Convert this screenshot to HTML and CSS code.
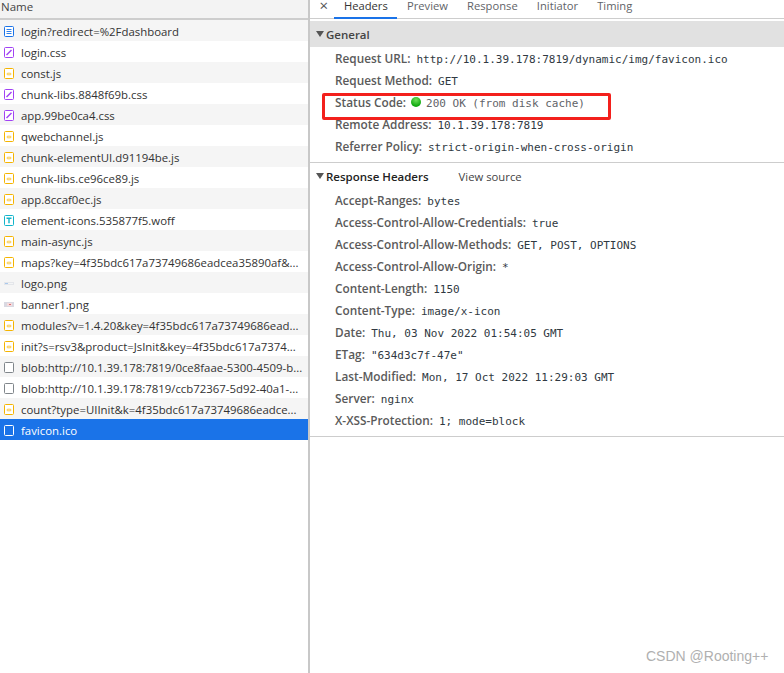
FILE: index.html
```html
<!DOCTYPE html>
<html>
<head>
<meta charset="utf-8">
<title>Network</title>
<link rel="stylesheet" href="styles.css">
</head>
<body>
<svg class="defs" width="0" height="0">
  <symbol id="i-doc" viewBox="0 0 10 11"><rect x=".5" y=".5" width="9" height="10" rx="1" fill="#fff" stroke="#1a73e8"/><path d="M2.5 3.5h5M2.5 5.5h5M2.5 7.5h5" stroke="#1a73e8" stroke-width=".9"/></symbol>
  <symbol id="i-css" viewBox="0 0 10 11"><rect x=".5" y=".5" width="9" height="10" rx="1" fill="#fff" stroke="#a142f4"/><path d="M2.5 8 7.5 3" stroke="#a142f4" stroke-width="1.4"/></symbol>
  <symbol id="i-js" viewBox="0 0 10 11"><rect x=".5" y=".5" width="9" height="10" rx="1" fill="#fff" stroke="#f5b400"/><rect x="3" y="5.2" width="4" height="1.6" rx=".8" fill="#fff" stroke="#f5b400" stroke-width=".7"/></symbol>
  <symbol id="i-font" viewBox="0 0 10 11"><rect x=".5" y=".5" width="9" height="10" rx="1" fill="#fff" stroke="#12b5cb"/><path d="M2.5 3.2h5M5 3.2v5" stroke="#12b5cb" stroke-width="1.4"/></symbol>
  <symbol id="i-blank" viewBox="0 0 10 11"><rect x=".5" y=".5" width="9" height="10" rx="1" fill="#fff" stroke="#80868b"/></symbol>
  <symbol id="i-sel" viewBox="0 0 10 11"><rect x=".5" y=".5" width="9" height="10" rx="1" fill="#1a73e8" stroke="#fff"/></symbol>
  <symbol id="i-logo" viewBox="0 0 10 11"><rect x="0" y="4" width="10" height="3" fill="#e4e6ea"/><rect x="1" y="5" width="3" height="1" fill="#a9c8ec"/><rect x="4" y="5" width="5" height="1" fill="#f4f5f6"/></symbol>
  <symbol id="i-banner" viewBox="0 0 10 11"><rect x="0" y="3" width="10" height="5" fill="#d9d9e2"/><rect x="3" y="4" width="5" height="3" fill="#f6dcdc"/><rect x="5" y="5" width="2" height="1" fill="#d9707a"/></symbol>
</svg>
<div class="app">
  <section class="names">
    <div class="names-head">Name</div>
    <ul class="rows">
      <li class="row"><svg class="ico"><use href="#i-doc"/></svg><span class="fname">login?redirect=%2Fdashboard</span></li>
      <li class="row"><svg class="ico"><use href="#i-css"/></svg><span class="fname">login.css</span></li>
      <li class="row"><svg class="ico"><use href="#i-js"/></svg><span class="fname">const.js</span></li>
      <li class="row"><svg class="ico"><use href="#i-css"/></svg><span class="fname">chunk-libs.8848f69b.css</span></li>
      <li class="row"><svg class="ico"><use href="#i-css"/></svg><span class="fname">app.99be0ca4.css</span></li>
      <li class="row"><svg class="ico"><use href="#i-js"/></svg><span class="fname">qwebchannel.js</span></li>
      <li class="row"><svg class="ico"><use href="#i-js"/></svg><span class="fname">chunk-elementUI.d91194be.js</span></li>
      <li class="row"><svg class="ico"><use href="#i-js"/></svg><span class="fname">chunk-libs.ce96ce89.js</span></li>
      <li class="row"><svg class="ico"><use href="#i-js"/></svg><span class="fname">app.8ccaf0ec.js</span></li>
      <li class="row"><svg class="ico"><use href="#i-font"/></svg><span class="fname">element-icons.535877f5.woff</span></li>
      <li class="row"><svg class="ico"><use href="#i-js"/></svg><span class="fname">main-async.js</span></li>
      <li class="row"><svg class="ico"><use href="#i-js"/></svg><span class="fname">maps?key=4f35bdc617a73749686eadcea35890af&amp;...</span></li>
      <li class="row"><svg class="ico"><use href="#i-logo"/></svg><span class="fname">logo.png</span></li>
      <li class="row"><svg class="ico"><use href="#i-banner"/></svg><span class="fname">banner1.png</span></li>
      <li class="row"><svg class="ico"><use href="#i-js"/></svg><span class="fname">modules?v=1.4.20&amp;key=4f35bdc617a73749686ead...</span></li>
      <li class="row"><svg class="ico"><use href="#i-js"/></svg><span class="fname">init?s=rsv3&amp;product=JsInit&amp;key=4f35bdc617a7374...</span></li>
      <li class="row"><svg class="ico"><use href="#i-blank"/></svg><span class="fname">blob:http://10.1.39.178:7819/0ce8faae-5300-4509-b...</span></li>
      <li class="row"><svg class="ico"><use href="#i-blank"/></svg><span class="fname">blob:http://10.1.39.178:7819/ccb72367-5d92-40a1-...</span></li>
      <li class="row"><svg class="ico"><use href="#i-js"/></svg><span class="fname">count?type=UIInit&amp;k=4f35bdc617a73749686eadce...</span></li>
      <li class="row selected"><svg class="ico"><use href="#i-sel"/></svg><span class="fname">favicon.ico</span></li>
    </ul>
  </section>
  <section class="detail">
    <nav class="tabs">
      <span class="close">×</span>
      <span class="tab active">Headers</span>
      <span class="tab">Preview</span>
      <span class="tab">Response</span>
      <span class="tab">Initiator</span>
      <span class="tab">Timing</span>
    </nav>
    <div class="general-bar"><span class="tri"></span>General</div>
    <dl class="kv general">
      <div class="kv-row"><dt>Request URL:</dt><dd>http://10.1.39.178:7819/dynamic/img/favicon.ico</dd></div>
      <div class="kv-row"><dt>Request Method:</dt><dd>GET</dd></div>
      <div class="kv-row"><dt>Status Code:</dt><dd class="status"><span class="dot"></span>200 OK (from disk cache)</dd></div>
      <div class="kv-row"><dt>Remote Address:</dt><dd>10.1.39.178:7819</dd></div>
      <div class="kv-row"><dt>Referrer Policy:</dt><dd>strict-origin-when-cross-origin</dd></div>
    </dl>
    <div class="resp-head"><span class="tri"></span><b>Response Headers</b><span class="view-source">View source</span></div>
    <dl class="kv resp">
      <div class="kv-row"><dt>Accept-Ranges:</dt><dd>bytes</dd></div>
      <div class="kv-row"><dt>Access-Control-Allow-Credentials:</dt><dd>true</dd></div>
      <div class="kv-row"><dt>Access-Control-Allow-Methods:</dt><dd>GET, POST, OPTIONS</dd></div>
      <div class="kv-row"><dt>Access-Control-Allow-Origin:</dt><dd>*</dd></div>
      <div class="kv-row"><dt>Content-Length:</dt><dd>1150</dd></div>
      <div class="kv-row"><dt>Content-Type:</dt><dd>image/x-icon</dd></div>
      <div class="kv-row"><dt>Date:</dt><dd>Thu, 03 Nov 2022 01:54:05 GMT</dd></div>
      <div class="kv-row"><dt>ETag:</dt><dd>"634d3c7f-47e"</dd></div>
      <div class="kv-row"><dt>Last-Modified:</dt><dd>Mon, 17 Oct 2022 11:29:03 GMT</dd></div>
      <div class="kv-row"><dt>Server:</dt><dd>nginx</dd></div>
      <div class="kv-row"><dt>X-XSS-Protection:</dt><dd>1; mode=block</dd></div>
    </dl>
  </section>
</div>
<div class="highlight"></div>
<div class="watermark">CSDN @Rooting++</div>
</body>
</html>
```
FILE: styles.css
```css
* { box-sizing: border-box; }
html, body { margin: 0; padding: 0; height: 100%; overflow: hidden; background: #fff; }
body { font-family: "Open Sans", "Noto Sans", sans-serif; font-size: 12px; color: #303942; position: relative; }
.defs { position: absolute; }
.app { display: flex; height: 673px; }

.names { width: 308px; flex: none; }
.names-head { height: 20px; background: #f3f3f3; border-bottom: 2px solid #cdcdcd; padding-left: 1px; line-height: 14px; font-size: 11.5px; color: #444; }
.rows { list-style: none; margin: 0; padding: 0; }
.row { height: 21px; display: flex; align-items: center; padding: 2px 0 0 4px; background: #fff; color: #333; font-size: 11.4px; }
.row:nth-child(odd) { background: #f5f5f5; }
.row.selected { background: #1a73e8; color: #fff; }
.ico { width: 10px; height: 11px; flex: none; margin-right: 7px; }
.fname { white-space: nowrap; }

.detail { flex: 1; min-width: 0; border-left: 2px solid #c8c8c8; }
.tabs { height: 19px; display: flex; align-items: flex-start; border-bottom: 1px solid #cdcdcd; background: #fff; color: #5f6368; font-size: 11.2px; padding-left: .4px; }
.close { width: 24px; padding-left: 9px; line-height: 11px; font-size: 15px; color: #555; }
.tab { height: 19px; line-height: 12px; padding: 0 9.6px; white-space: nowrap; }
.tab.active { color: #333; border-bottom: 2px solid #1a73e8; }

.general-bar { margin-top: 2px; height: 26px; background: #e1e1e1; display: flex; align-items: center; padding-left: 6px; font-size: 11.5px; font-weight: 600; color: #444; }
.tri { width: 0; height: 0; border-left: 4px solid transparent; border-right: 4px solid transparent; border-top: 6px solid #555; margin-right: 2px; flex: none; }

.kv { margin: 0; padding-left: 25px; }
.kv-row { height: 22px; display: flex; align-items: center; white-space: nowrap; }
.kv dt { font-weight: 600; color: #5a5a5a; font-size: 11.8px; margin-right: 6px; }
.kv dd { margin: 0; padding-top: 2px; font-family: "DejaVu Sans Mono", monospace; font-size: 11px; color: #303942; }
.general { padding-bottom: 5px; border-bottom: 1px solid #cdcdcd; }
.kv .status { display: flex; align-items: center; margin-left: -1px; color: #5f6368; }
.dot { width: 10px; height: 10px; border-radius: 50%; background: radial-gradient(circle at 50% 30%, #6fe05a, #0fa80f 70%); margin-right: 5px; margin-top: -2px; }

.resp-head { height: 26px; display: flex; align-items: center; padding-left: 6px; color: #222; font-size: 11.5px; }
.resp-head b { font-weight: 600; }
.view-source { margin-left: 30px; color: #444; font-size: 11.3px; }
.resp { padding-bottom: 5px; border-bottom: 1px solid #cdcdcd; }

.highlight { position: absolute; left: 322px; top: 93px; width: 289px; height: 27px; border: 3px solid #f3201c; border-radius: 2px; }
.watermark { position: absolute; left: 646px; top: 648px; font-family: "Liberation Sans", sans-serif; font-size: 14px; color: #b0b0b0; white-space: nowrap; }
```
